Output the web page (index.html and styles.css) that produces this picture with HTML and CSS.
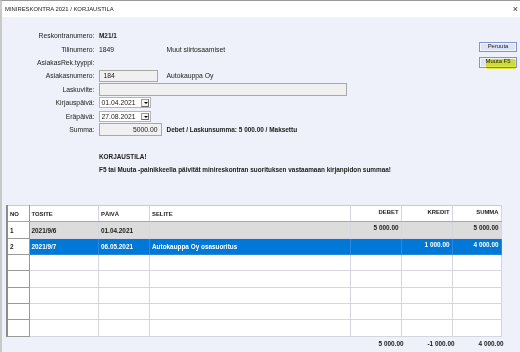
FILE: index.html
```html
<!DOCTYPE html>
<html lang="fi">
<head>
<meta charset="utf-8">
<title>Minireskontra</title>
<link rel="stylesheet" href="styles.css">
</head>
<body>
<div class="window">
  <div class="titlebar">
    <span class="title">MINIRESKONTRA 2021 / KORJAUSTILA</span>
    <span class="close">×</span>
  </div>
  <div class="content">
    <div class="top">
      <div class="form">
        <span class="lbl">Reskontranumero:</span><span class="val b">M21/1</span><span></span>
        <span class="lbl">Tilinumero:</span><span class="val">1849</span><span class="val">Muut siirtosaamiset</span>
        <span class="lbl">AsiakasRek.tyyppi:</span><span></span><span></span>
        <span class="lbl">Asiakasnumero:</span><span class="field w59">184</span><span class="val">Autokauppa Oy</span>
        <span class="lbl">Laskuviite:</span><span class="field wide"></span>
        <span class="lbl">Kirjauspäivä:</span><span class="field date">01.04.2021<span class="drop"></span></span><span></span>
        <span class="lbl">Eräpäivä:</span><span class="field date">27.08.2021<span class="drop"></span></span><span></span>
        <span class="lbl">Summa:</span><span class="field sum">5000.00</span><span class="val b">Debet / Laskunsumma: 5 000.00 / Maksettu</span>
      </div>
      <div class="actions">
        <button class="btn">Peruuta</button>
        <span class="hl-wrap"><button class="btn">Muuta F5</button><span class="highlight"></span></span>
      </div>
    </div>
    <div class="notice">
      <p>KORJAUSTILA!</p>
      <p>F5 tai Muuta -painikkeella päivität minireskontran suorituksen vastaamaan kirjanpidon summaa!</p>
    </div>
    <table class="grid">
      <colgroup>
        <col class="c-no"><col class="c-tos"><col class="c-pv"><col class="c-sel"><col class="c-num"><col class="c-num"><col class="c-sum">
      </colgroup>
      <thead>
        <tr><th class="no">NO</th><th>TOSITE</th><th>PÄIVÄ</th><th>SELITE</th><th class="r">DEBET</th><th class="r">KREDIT</th><th class="r">SUMMA</th></tr>
      </thead>
      <tbody>
        <tr class="gray"><td class="no">1</td><td>2021/9/6</td><td>01.04.2021</td><td></td><td class="r">5 000.00</td><td class="r"></td><td class="r">5 000.00</td></tr>
        <tr class="sel"><td class="no">2</td><td>2021/9/7</td><td>06.05.2021</td><td>Autokauppa Oy osasuoritus</td><td class="r"></td><td class="r">1 000.00</td><td class="r">4 000.00</td></tr>
        <tr><td class="no"></td><td></td><td></td><td></td><td></td><td></td><td></td></tr>
        <tr><td class="no"></td><td></td><td></td><td></td><td></td><td></td><td></td></tr>
        <tr><td class="no"></td><td></td><td></td><td></td><td></td><td></td><td></td></tr>
        <tr><td class="no"></td><td></td><td></td><td></td><td></td><td></td><td></td></tr>
        <tr><td class="no"></td><td></td><td></td><td></td><td></td><td></td><td></td></tr>
      </tbody>
    </table>
    <div class="totals">
      <span></span><span>5 000.00</span><span>-1 000.00</span><span>4 000.00</span>
    </div>
  </div>
</div>
</body>
</html>
```

FILE: styles.css
```css
* { box-sizing: border-box; }
html, body { margin: 0; padding: 0; }
body {
  width: 520px;
  height: 352px;
  overflow: hidden;
  font-family: "Liberation Sans", Arial, sans-serif;
  color: #1a1a1a;
  background: #eef1f9;
}
.window {
  width: 520px;
  height: 352px;
  border-left: 2px solid #c9c9c9;
  border-top: 1px solid #9a9a9a;
  display: flex;
  flex-direction: column;
}
.titlebar {
  height: 16px;
  background: #ffffff;
  display: flex;
  align-items: center;
  justify-content: space-between;
  padding: 0 2px 0 3px;
  font-size: 5.9px;
}
.close {
  font-size: 9px;
  color: #333;
  line-height: 1;
}
.content {
  flex: 1;
  display: flex;
  flex-direction: column;
}
.top {
  display: flex;
  justify-content: space-between;
  padding-top: 12px;
}
.form {
  display: grid;
  grid-template-columns: 96.5px 67.5px 200px;
  grid-auto-rows: 13.4px;
  align-items: center;
  font-size: 6.8px;
}
.lbl {
  text-align: right;
  padding-right: 4px;
  color: #222;
}
.val { padding-left: 0.5px; }
.b { font-weight: bold; font-size: 6.45px; }
.field {
  height: 12.5px;
  border: 1px solid #a8a8a8;
  background: #f0f0f0;
  display: flex;
  align-items: center;
  padding: 0 4px;
  position: relative;
}
.w59 { width: 59px; }
.wide { grid-column: 2 / 4; width: 248.5px; }
.date {
  width: 52.5px;
  height: 11px;
  background: #ffffff;
  border-color: #b5b5b5;
  padding-left: 2px;
}
.drop {
  position: absolute;
  right: 1px;
  top: 1px;
  width: 8px;
  height: 7.5px;
  border: 1px solid #9c9c9c;
  border-right-color: #6a6a6a;
  border-bottom-color: #6a6a6a;
  background: #f4f4f4;
}
.drop::after {
  content: "";
  position: absolute;
  left: 1.5px;
  top: 2px;
  border-left: 2px solid transparent;
  border-right: 2px solid transparent;
  border-top: 2px solid #000;
}
.sum {
  width: 63px;
  justify-content: flex-end;
  padding-right: 3px;
}
.actions {
  display: flex;
  flex-direction: column;
  gap: 5px;
  padding-top: 12.5px;
  padding-right: 3px;
}
.btn {
  display: block;
  width: 38px;
  height: 10.5px;
  padding: 0;
  border: 1px solid #8391cf;
  background: #dde3f5;
  font-family: "Liberation Sans", Arial, sans-serif;
  font-size: 5.9px;
  color: #222;
  line-height: 1;
  box-shadow: inset 0 0 0 1px #f3f5fc;
}
.hl-wrap { position: relative; display: flex; }
.highlight {
  position: absolute;
  left: 7px;
  top: 1.5px;
  width: 30px;
  height: 10.5px;
  background: rgba(232, 240, 0, 0.75);
  mix-blend-mode: multiply;
  border-radius: 2px;
}
.notice {
  padding-left: 97px;
  margin-top: 16.5px;
  font-size: 6.4px;
  font-weight: bold;
}
.notice p { margin: 0 0 6px 0; line-height: 7.5px; }
.grid {
  margin-top: 25.5px;
  margin-left: 4px;
  width: 494px;
  border-collapse: collapse;
  table-layout: fixed;
  background: #ffffff;
  font-size: 6.4px;
  font-weight: bold;
}
.c-no { width: 22px; }
.c-tos { width: 69.5px; }
.c-pv { width: 51px; }
.c-sel { width: 200.5px; }
.c-num { width: 51px; }
.c-sum { width: 49px; }
.grid th, .grid td {
  height: 16.3px;
  border: 1px solid #d3d6de;
  padding: 0 2px;
  text-align: left;
  vertical-align: middle;
  white-space: nowrap;
  overflow: hidden;
}
.grid thead th {
  font-size: 5.9px;
  border-top-color: #c9cbd1;
  border-bottom: 1px solid #a7a9ae;
}
.grid thead th.r { vertical-align: top; padding-top: 3px; }
.grid .no {
  border-left: 2px solid #8e8e8e;
  border-right: 1.5px solid #9a9a9a;
  background: #ffffff;
  color: #1a1a1a;
}
.grid tbody .no { border-bottom-color: #9a9a9a; }
.grid .r { text-align: right; }
.grid td.r { vertical-align: top; padding-top: 2px; }
.grid tr.gray td { background: #dcdcdc; }
.grid tr.gray td.no { background: #ffffff; }
.grid tr.sel td {
  background: #0078d7;
  color: #ffffff;
  border-color: #2a89dc;
}
.grid tr.sel td.no {
  background: #ffffff;
  color: #1a1a1a;
  border-left: 2px solid #8e8e8e;
  border-right: 1.5px solid #9a9a9a;
  border-bottom-color: #9a9a9a;
}
.totals {
  display: grid;
  grid-template-columns: 346.5px 52px 51px 49px;
  margin-left: 4px;
  margin-top: 3px;
  font-size: 6.4px;
  font-weight: bold;
  text-align: right;
}
.totals span { padding-right: 1px; }
```
